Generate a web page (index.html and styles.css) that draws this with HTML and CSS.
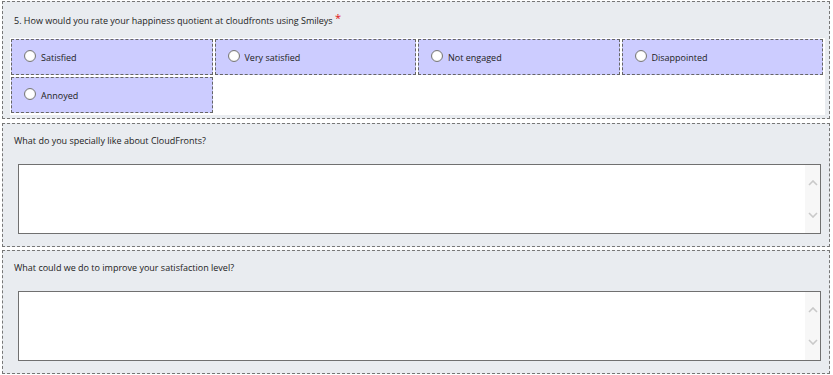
FILE: index.html
```html
<!DOCTYPE html>
<html lang="en">
<head>
<meta charset="UTF-8" />
<meta name="viewport" content="width=device-width, initial-scale=1" />
<title>Satisfaction Survey</title>
<link rel="stylesheet" href="styles.css">
</head>
<body>

<div class="section">
  <div class="question">5. How would you rate your happiness quotient at cloudfronts using Smileys <span class="req">*</span></div>
  <div class="options">
    <label class="option"><input type="radio" name="smiley" /> Satisfied</label>
    <label class="option"><input type="radio" name="smiley" /> Very satisfied</label>
    <label class="option"><input type="radio" name="smiley" /> Not engaged</label>
    <label class="option"><input type="radio" name="smiley" /> Disappointed</label>
    <label class="option"><input type="radio" name="smiley" /> Annoyed</label>
  </div>
</div>

<div class="section">
  <div class="question">What do you specially like about CloudFronts?</div>
  <div class="textbox">
    <textarea id="likeText"></textarea>
    <div class="scroll">
      <svg width="10" height="6" viewBox="0 0 10 6"><path d="M1 5 L5 1 L9 5" fill="none" stroke="#c9c9c9" stroke-width="1.6"/></svg>
      <svg width="10" height="6" viewBox="0 0 10 6"><path d="M1 1 L5 5 L9 1" fill="none" stroke="#c9c9c9" stroke-width="1.6"/></svg>
    </div>
  </div>
</div>

<div class="section">
  <div class="question">What could we do to improve your satisfaction level?</div>
  <div class="textbox">
    <textarea id="improveText"></textarea>
    <div class="scroll">
      <svg width="10" height="6" viewBox="0 0 10 6"><path d="M1 5 L5 1 L9 5" fill="none" stroke="#c9c9c9" stroke-width="1.6"/></svg>
      <svg width="10" height="6" viewBox="0 0 10 6"><path d="M1 1 L5 5 L9 1" fill="none" stroke="#c9c9c9" stroke-width="1.6"/></svg>
    </div>
  </div>
</div>

</body>
</html>
```

FILE: styles.css
```css
* {
  box-sizing: border-box;
}
body {
  margin: 0;
  padding: 1px 3px 0 2px;
  background: #fff;
  font-family: 'Open Sans', 'Noto Sans', sans-serif;
  font-size: 9px;
  color: #222;
}
.section {
  background: #e9ecf0;
  border: 1px dashed #777;
  margin-bottom: 3px;
  padding-bottom: 12px;
}
.section:first-child {
  padding-bottom: 3px;
  margin-bottom: 4px;
}
.question {
  padding: 9px 0 0 11px;
  line-height: 16px;
  margin-bottom: 15px;
}
.section:first-child .question {
  padding-top: 10px;
  margin-bottom: 9px;
}
.req {
  color: #e01010;
  font-size: 11px;
  position: relative;
  top: -2px;
}
.options {
  background: #fff;
  margin: 0 4px 0 7px;
  padding: 1px 2px 2px 1px;
  display: grid;
  grid-template-columns: repeat(4, 1fr);
  gap: 2px;
}
.option {
  display: flex;
  align-items: center;
  height: 36px;
  padding-left: 12px;
  background: #ccccff;
  border: 1px dashed #666;
  cursor: pointer;
}
.option input {
  appearance: none;
  -webkit-appearance: none;
  width: 12px;
  height: 12px;
  margin: -3px 5px 0 0;
  border: 1px solid #777;
  border-radius: 50%;
  background: #fff;
  box-shadow: inset 0 0 1px #bbb;
}
.option input:checked {
  background: radial-gradient(circle, #333 0 2.5px, #fff 3px);
}
.textbox {
  display: flex;
  height: 70px;
  margin: 0 8px 0 15px;
  border: 1px solid #707070;
  background: #fff;
}
.textbox textarea {
  flex: 1;
  border: none;
  outline: none;
  resize: none;
  font-family: inherit;
  font-size: 11px;
  padding: 3px;
}
.scroll {
  width: 15px;
  background: #f7f7f7;
  display: flex;
  flex-direction: column;
  justify-content: space-between;
  align-items: center;
  padding: 15px 0 15px;
}
```
